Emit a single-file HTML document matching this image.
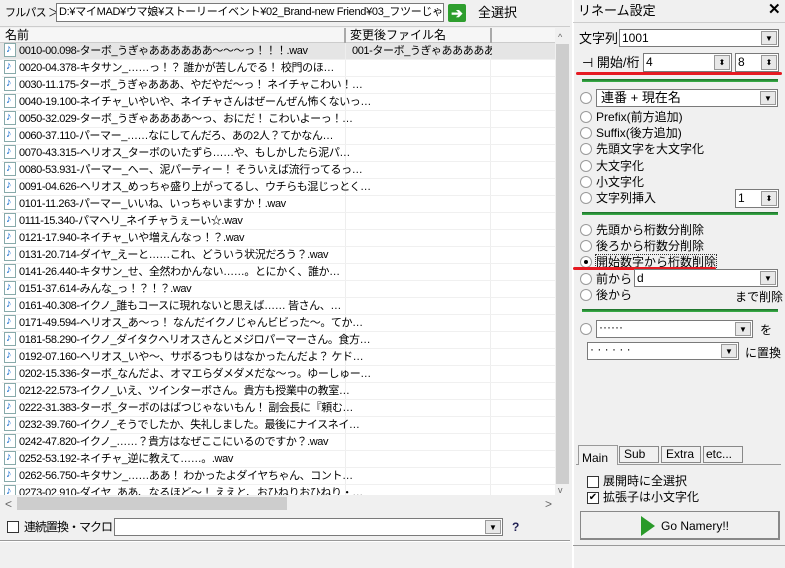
<!DOCTYPE html><html><head><meta charset="utf-8"><style>
*{box-sizing:border-box;margin:0;padding:0}
body{width:785px;height:568px;background:#f0f0f0;font-family:"Liberation Sans","Noto Sans CJK JP",sans-serif;font-size:12px;color:#000;position:relative;overflow:hidden}
.a{position:absolute}
.box{position:absolute;background:#fff;border:1px solid #7a7a7a;line-height:16px;font-size:12px}
.row{position:absolute;left:2px;height:17px;line-height:17px;white-space:nowrap;width:553px;border-bottom:1px solid #f0f0f0;font-size:11px;letter-spacing:-0.4px}
.ic{display:inline-block;width:12px;height:14px;border:1px solid #8aa;background:#fff;vertical-align:-3px;margin:0 3px 0 2px;position:relative}
.ic:after{content:"♪";position:absolute;left:1px;top:-3px;color:#1a6fd0;font-size:11px}
.rad{position:absolute;width:12px;height:12px;border-radius:50%;border:1px solid #9a9a9a;background:#fff}
.dd{position:absolute;right:1px;top:1px;width:16px;bottom:1px;background:#e8e8e8;border:1px solid #999;font-size:8px;text-align:center;line-height:14px}
.gl{position:absolute;left:582px;width:196px;height:3px;background:linear-gradient(#1c6b2a,#3cb44a)}
.lbl{position:absolute;font-size:12px;line-height:14px;white-space:nowrap}
.red{position:absolute;height:3px;background:#e51a22;border-radius:2px}
</style></head><body>
<div class="a" style="left:0;top:0;width:570px;height:27px;border-bottom:1px solid #ccc"></div>
<div class="lbl" style="left:5px;top:6px;font-size:11px;letter-spacing:-0.8px">フルパス ＞</div>
<div class="box" style="left:56px;top:3px;width:388px;height:19px;padding-left:2px;white-space:nowrap;overflow:hidden;font-size:11px;letter-spacing:-0.3px">D:¥マイMAD¥ウマ娘¥ストーリーイベント¥02_Brand-new Friend¥03_フツーじゃない先輩たち</div>
<div class="a" style="left:448px;top:4px;width:18px;height:18px;background:#2e9e2e;border-radius:2px;color:#fff;font-weight:bold;text-align:center;line-height:18px;font-size:14px">➔</div>
<div class="lbl" style="left:478px;top:6px;font-size:13px">全選択</div>
<div class="a" style="left:0;top:28px;width:555px;height:15px;background:#f6f6f6;border-bottom:1px solid #ccc"></div>
<div class="lbl" style="left:5px;top:28px">名前</div>
<div class="a" style="left:344px;top:28px;width:2px;height:15px;background:#aaa"></div>
<div class="lbl" style="left:350px;top:28px">変更後ファイル名</div>
<div class="a" style="left:490px;top:28px;width:2px;height:15px;background:#aaa"></div>
<div class="a" style="left:0;top:43px;width:555px;height:452px;background:#fff;overflow:hidden" id="list"></div>
<div class="a" style="left:555px;top:28px;width:15px;height:467px;background:#f0f0f0"></div>
<div class="lbl" style="left:558px;top:30px;font-size:9px;color:#666">^</div>
<div class="a" style="left:556px;top:44px;width:13px;height:440px;background:#cdcdcd"></div>
<div class="lbl" style="left:558px;top:483px;font-size:9px;color:#666">v</div>
<div class="a" style="left:0;top:495px;width:570px;height:17px;background:#f0f0f0"></div>
<div class="a" style="left:17px;top:497px;width:270px;height:13px;background:#cdcdcd"></div>
<div class="lbl" style="left:5px;top:497px;color:#666">&lt;</div><div class="lbl" style="left:545px;top:497px;color:#666">&gt;</div>
<div class="a" style="left:7px;top:521px;width:12px;height:12px;border:1px solid #333;background:#fff"></div>
<div class="lbl" style="left:24px;top:520px;letter-spacing:-1px">連続置換・マクロ</div>
<div class="box" style="left:114px;top:518px;width:389px;height:18px"><div class="dd">▼</div></div>
<div class="lbl" style="left:512px;top:520px;font-weight:bold;color:#225">?</div>
<div class="a" style="left:0;top:540px;width:570px;height:2px;border-top:1px solid #999;border-bottom:1px solid #fff"></div>
<!-- right panel -->
<div class="a" style="left:572px;top:0;width:2px;height:568px;background:#fff"></div>
<div class="lbl" style="left:578px;top:4px;font-size:13px">リネーム設定</div>
<div class="lbl" style="left:768px;top:3px;font-size:15px;font-weight:bold">✕</div>
<div class="a" style="left:573px;top:22px;width:212px;height:1px;background:#ccc"></div>
<div class="lbl" style="left:579px;top:32px;font-size:13px">文字列</div>
<div class="box" style="left:619px;top:29px;width:160px;height:18px;padding-left:2px">1001<div class="dd">▼</div></div>
<div class="lbl" style="left:582px;top:56px;font-size:13px">⊣ 開始/桁</div>
<div class="box" style="left:643px;top:53px;width:89px;height:19px;padding-left:2px">4<div class="dd">⬍</div></div>
<div class="box" style="left:735px;top:53px;width:44px;height:19px;padding-left:2px">8<div class="dd">⬍</div></div>
<div class="red" style="left:576px;top:72px;width:206px"></div>
<div class="gl" style="top:79px"></div>
<div class="rad" style="left:580px;top:92px"></div>
<div class="box" style="left:596px;top:89px;width:182px;height:18px;padding-left:4px;font-size:13px">連番 + 現在名<div class="dd">▼</div></div>
<div class="rad" style="left:580px;top:111px"></div><div class="lbl" style="left:596px;top:110px">Prefix(前方追加)</div>
<div class="rad" style="left:580px;top:127px"></div><div class="lbl" style="left:596px;top:126px">Suffix(後方追加)</div>
<div class="rad" style="left:580px;top:143px"></div><div class="lbl" style="left:596px;top:142px">先頭文字を大文字化</div>
<div class="rad" style="left:580px;top:160px"></div><div class="lbl" style="left:596px;top:159px">大文字化</div>
<div class="rad" style="left:580px;top:176px"></div><div class="lbl" style="left:596px;top:175px">小文字化</div>
<div class="rad" style="left:580px;top:192px"></div><div class="lbl" style="left:596px;top:191px">文字列挿入</div>
<div class="box" style="left:735px;top:189px;width:44px;height:19px;padding-left:2px">1<div class="dd">⬍</div></div>
<div class="gl" style="top:212px"></div>
<div class="rad" style="left:580px;top:224px"></div><div class="lbl" style="left:596px;top:223px">先頭から桁数分削除</div>
<div class="rad" style="left:580px;top:240px"></div><div class="lbl" style="left:596px;top:239px">後ろから桁数分削除</div>
<div class="rad" style="left:580px;top:256px"><div style="width:4px;height:4px;background:#000;border-radius:50%;margin:3px"></div></div><div class="lbl" style="left:596px;top:255px;outline:1px dotted #333">開始数字から桁数削除</div>
<div class="red" style="left:573px;top:267px;width:143px"></div>
<div class="rad" style="left:580px;top:273px"></div><div class="lbl" style="left:596px;top:272px">前から</div>
<div class="box" style="left:634px;top:269px;width:144px;height:18px;padding-left:2px">d<div class="dd">▼</div></div>
<div class="rad" style="left:580px;top:289px"></div><div class="lbl" style="left:596px;top:288px">後から</div>
<div class="lbl" style="left:735px;top:290px">まで削除</div>
<div class="gl" style="top:309px"></div>
<div class="rad" style="left:580px;top:323px"></div>
<div class="box" style="left:596px;top:320px;width:157px;height:18px;line-height:12px;padding-left:2px">······<div class="dd">▼</div></div>
<div class="lbl" style="left:760px;top:323px">を</div>
<div class="box" style="left:587px;top:342px;width:152px;height:18px;line-height:12px;padding-left:2px">· · · · · ·<div class="dd">▼</div></div>
<div class="lbl" style="left:745px;top:346px">に置換</div>
<div class="a" style="left:576px;top:464px;width:205px;height:1px;background:#999"></div>
<div class="a" style="left:578px;top:445px;width:40px;height:20px;background:#f0f0f0;border:1px solid #999;border-bottom:none"></div>
<div class="lbl" style="left:582px;top:451px">Main</div>
<div class="a" style="left:619px;top:446px;width:40px;height:17px;border:1px solid #888"></div><div class="lbl" style="left:624px;top:447px">Sub</div>
<div class="a" style="left:661px;top:446px;width:40px;height:17px;border:1px solid #888"></div><div class="lbl" style="left:666px;top:447px">Extra</div>
<div class="a" style="left:703px;top:446px;width:40px;height:17px;border:1px solid #888"></div><div class="lbl" style="left:706px;top:447px">etc...</div>
<div class="a" style="left:587px;top:476px;width:12px;height:12px;border:1px solid #333;background:#fff"></div>
<div class="lbl" style="left:603px;top:474px">展開時に全選択</div>
<div class="a" style="left:587px;top:492px;width:12px;height:12px;border:1px solid #333;background:#fff;font-size:10px;line-height:10px;text-align:center">✔</div>
<div class="lbl" style="left:603px;top:490px">拡張子は小文字化</div>
<div class="a" style="left:580px;top:511px;width:200px;height:29px;border:1px solid #888;background:#f0f0f0;border-right-width:2px;border-bottom-width:2px"></div>
<svg class="a" style="left:640px;top:515px" width="16" height="22"><polygon points="1,1 15,11 1,21" fill="#2a9a2a"/></svg>
<div class="lbl" style="left:661px;top:519px">Go Namery!!</div>
<div class="a" style="left:573px;top:545px;width:212px;height:1px;background:#999"></div>
<script>
var r=["0010-00.098-ターボ_うぎゃああああああ～～～っ！！！.wav","0020-04.378-キタサン_……っ！？ 誰かが苦しんでる！ 校門のほ…","0030-11.175-ターボ_うぎゃあああ、やだやだ～っ！ ネイチャこわい！…","0040-19.100-ネイチャ_いやいや、ネイチャさんはぜーんぜん怖くないっ…","0050-32.029-ターボ_うぎゃああああ～っ、おにだ！ こわいよーっ！…","0060-37.110-パーマー_……なにしてんだろ、あの2人？てかなん…","0070-43.315-ヘリオス_ターボのいたずら……や、もしかしたら泥パ…","0080-53.931-パーマー_へー、泥パーティー！ そういえば流行ってるっ…","0091-04.626-ヘリオス_めっちゃ盛り上がってるし、ウチらも混じっとく…","0101-11.263-パーマー_いいね、いっちゃいますか！.wav","0111-15.340-パマヘリ_ネイチャうぇーい☆.wav","0121-17.940-ネイチャ_いや増えんなっ！？.wav","0131-20.714-ダイヤ_えーと……これ、どういう状況だろう？.wav","0141-26.440-キタサン_せ、全然わかんない……。とにかく、誰か…","0151-37.614-みんな_っ！？！？.wav","0161-40.308-イクノ_誰もコースに現れないと思えば…… 皆さん、…","0171-49.594-ヘリオス_あ～っ！ なんだイクノじゃんビビった～。てか…","0181-58.290-イクノ_ダイタクヘリオスさんとメジロパーマーさん。食方…","0192-07.160-ヘリオス_いや～、サボるつもりはなかったんだよ？ ケド…","0202-15.336-ターボ_なんだよ、オマエらダメダメだな～っ。ゆーしゅー…","0212-22.573-イクノ_いえ、ツインターボさん。貴方も授業中の教室…","0222-31.383-ターボ_ターボのはばつじゃないもん！ 副会長に『頼む…","0232-39.760-イクノ_そうでしたか、失礼しました。最後にナイスネイ…","0242-47.820-イクノ_……？貴方はなぜここにいるのですか？.wav","0252-53.192-ネイチャ_逆に教えて……。.wav","0262-56.750-キタサン_……ああ！ わかったよダイヤちゃん、コント…","0273-02.910-ダイヤ_ああ、なるほど～！ ええと、おひねりおひねり・…"];
var h='<div class="a" style="left:0;top:0;width:555px;height:17px;background:#e5e5e5"></div><div class="a" style="left:345px;top:0;width:1px;height:452px;background:#eee"></div><div class="a" style="left:490px;top:0;width:1px;height:452px;background:#eee"></div>';
r.forEach(function(t,i){h+='<div class="row" style="top:'+(i*17)+'px"><span class="ic"></span>'+t+(i==0?'<span style="position:absolute;left:350px;width:140px;overflow:hidden">001-ターボ_うぎゃあああああああ～…</span>':'')+'</div>'});
document.getElementById("list").innerHTML=h;
</script>
</body></html>
